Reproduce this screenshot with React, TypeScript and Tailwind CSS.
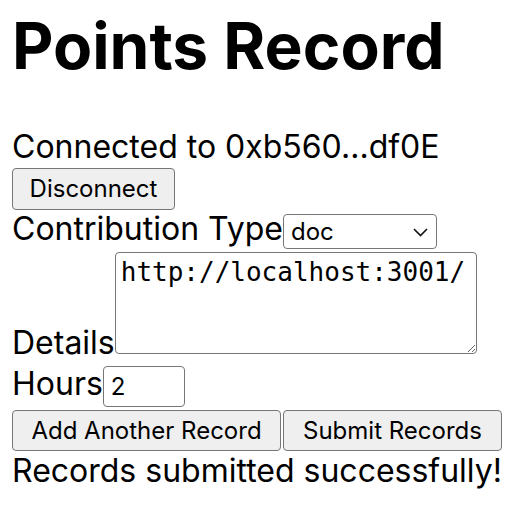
import { useState } from "react";

const btn =
  "block h-[41px] rounded-[4px] border-[1.5px] border-[#767676] bg-[#efefef] px-[15px] text-[24px] leading-none text-black font-['Inter',sans-serif]";

export default function App() {
  const [type, setType] = useState("doc");
  const [details, setDetails] = useState("http://localhost:3001/");
  const [hours, setHours] = useState("2");

  return (
    <main className="px-[12px] text-black bg-white font-['Inter',sans-serif] text-[32px] leading-[39px]">
      <h1 className="mt-[7px] mb-[43px] text-[64px] leading-[77px] font-bold">
        Points Record
      </h1>

      <div>Connected to 0xb560...df0E</div>
      <div className="mt-[2px] flex">
        <button className={btn + " h-[42px] w-[163px]"}>Disconnect</button>
      </div>

      <div className="flex items-start">
        <span className="leading-[38px]">Contribution Type</span>
        <div className="relative mt-[4px] leading-none">
          <select
            value={type}
            onChange={(e) => setType(e.target.value)}
            className="block h-[35px] w-[154px] appearance-none rounded-[4px] border-[1.5px] border-[#767676] bg-white pl-[7px] text-[24px] font-['Inter',sans-serif]"
          >
            <option value="doc">doc</option>
            <option value="code">code</option>
            <option value="design">design</option>
          </select>
          <svg
            className="pointer-events-none absolute right-[9px] top-[14px]"
            width="15"
            height="9"
            viewBox="0 0 15 9"
            fill="none"
          >
            <path d="M1 1l6.5 6.5L14 1" stroke="#111" strokeWidth="1.6" />
          </svg>
        </div>
      </div>

      <div className="flex items-end">
        <span className="leading-[23px]">Details</span>
        <textarea
          value={details}
          onChange={(e) => setDetails(e.target.value)}
          className="mt-[3px] block h-[102px] w-[362px] rounded-[4px] border-[1.5px] border-[#767676] px-[5px] py-[3px] text-[26px] leading-[32px] font-['DejaVu_Sans_Mono',monospace]"
        />
      </div>

      <div className="flex items-start">
        <span className="mt-[10px]">Hours</span>
        <input
          value={hours}
          onChange={(e) => setHours(e.target.value)}
          className="mt-[12px] block h-[41px] w-[82px] rounded-[4px] border-[1.5px] border-[#767676] px-[7px] text-[24px] leading-none font-['Inter',sans-serif]"
        />
      </div>

      <div className="mt-[3px] flex gap-[2px]">
        <button className={btn + " w-[269px]"}>Add Another Record</button>
        <button className={btn + " w-[219px]"}>Submit Records</button>
      </div>

      <p>Records submitted successfully!</p>
    </main>
  );
}
